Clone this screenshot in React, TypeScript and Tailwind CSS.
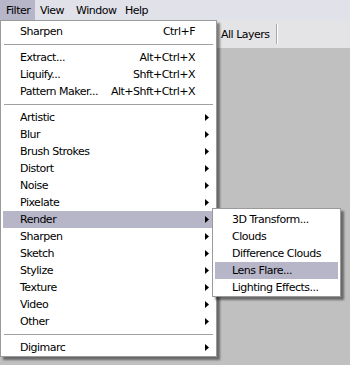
import { Fragment } from "react";

type Item =
  | { sep: true }
  | { label: string; shortcut?: string; sub?: boolean; active?: boolean };

const filterItems: Item[] = [
  { label: "Sharpen", shortcut: "Ctrl+F" },
  { sep: true },
  { label: "Extract...", shortcut: "Alt+Ctrl+X" },
  { label: "Liquify...", shortcut: "Shft+Ctrl+X" },
  { label: "Pattern Maker...", shortcut: "Alt+Shft+Ctrl+X" },
  { sep: true },
  { label: "Artistic", sub: true },
  { label: "Blur", sub: true },
  { label: "Brush Strokes", sub: true },
  { label: "Distort", sub: true },
  { label: "Noise", sub: true },
  { label: "Pixelate", sub: true },
  { label: "Render", sub: true, active: true },
  { label: "Sharpen", sub: true },
  { label: "Sketch", sub: true },
  { label: "Stylize", sub: true },
  { label: "Texture", sub: true },
  { label: "Video", sub: true },
  { label: "Other", sub: true },
  { sep: true },
  { label: "Digimarc", sub: true },
];

const renderItems = [
  { label: "3D Transform..." },
  { label: "Clouds" },
  { label: "Difference Clouds" },
  { label: "Lens Flare...", active: true },
  { label: "Lighting Effects..." },
];

function Arrow() {
  return (
    <svg width="4" height="7" viewBox="0 0 4 7" className="block">
      <polygon points="0,0 4,3.5 0,7" fill="#000" />
    </svg>
  );
}

function MenuRow({ item }: { item: Item }) {
  if ("sep" in item) {
    return (
      <div className="h-[9px] flex items-center">
        <div className="h-px w-full mx-px bg-[#a0a0a0]" />
      </div>
    );
  }
  return (
    <div
      className={`h-[17px] flex items-center pl-[17px] pr-[5px] ${
        item.active ? "bg-[#b7b6c9]" : ""
      }`}
    >
      <span className="flex-1 whitespace-nowrap">{item.label}</span>
      {item.shortcut && <span className="whitespace-nowrap">{item.shortcut}</span>}
      <span className="w-[14px] flex justify-end">{item.sub && <Arrow />}</span>
    </div>
  );
}

export default function App() {
  return (
    <div className="relative w-[350px] h-[365px] overflow-hidden bg-[#c0c0c0] text-[11px] leading-none tracking-[-0.5px] text-black font-['DejaVu_Sans',sans-serif]">
      {/* menu bar */}
      <div className="h-[20px] flex bg-[#e1e1e9]">
        <div className="w-[35px] pl-[6px] flex items-center bg-[#b7b6c9]">Filter</div>
        <div className="w-[35px] pl-[5px] flex items-center">View</div>
        <div className="w-[49px] pl-[6px] flex items-center">Window</div>
        <div className="pl-[6px] flex items-center">Help</div>
      </div>

      {/* options bar */}
      <div className="h-[28px] flex items-center bg-[#e4e4e6] pl-[221px]">
        <span className="whitespace-nowrap">All Layers</span>
        <div className="ml-[6px] h-[20px] w-[2px] border-l border-[#a8a8a8] border-r border-r-white" />
      </div>

      {/* Filter dropdown */}
      <div className="absolute left-0 top-[20px] w-[217px] bg-white border border-[#9a9a9a] px-[2px] pt-[2px] shadow-[3px_3px_2px_rgba(0,0,0,0.45)]">
        {filterItems.map((it, i) => (
          <Fragment key={i}>
            <MenuRow item={it} />
          </Fragment>
        ))}
      </div>

      {/* Render submenu */}
      <div className="absolute left-[212px] top-[208px] w-[129px] bg-white border border-[#9a9a9a] px-[2px] pt-[2px] shadow-[3px_3px_2px_rgba(0,0,0,0.45)]">
        {renderItems.map((it) => (
          <div
            key={it.label}
            className={`h-[17px] flex items-center pl-[17px] whitespace-nowrap ${
              it.active ? "bg-[#b7b6c9]" : ""
            }`}
          >
            {it.label}
          </div>
        ))}
      </div>
    </div>
  );
}
